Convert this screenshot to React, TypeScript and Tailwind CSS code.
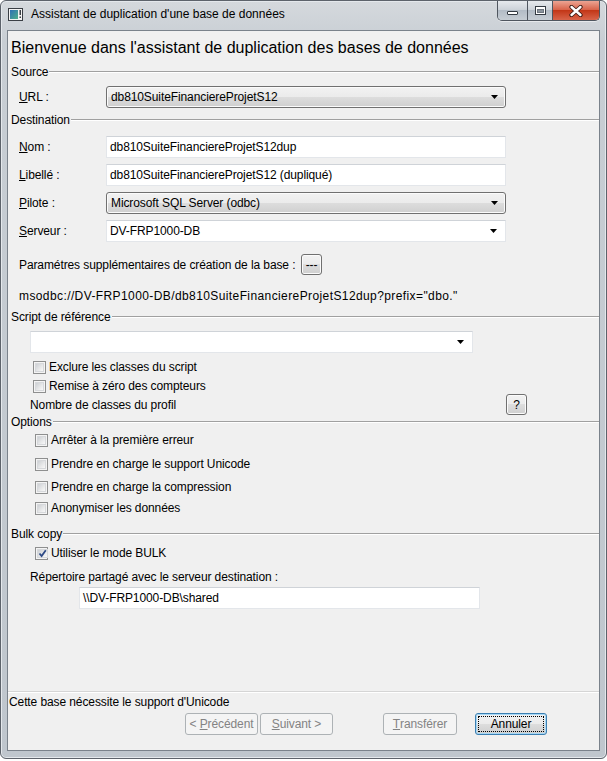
import type { ReactNode } from 'react';

function Arrow() {
  return (
    <svg width="7" height="4" viewBox="0 0 7 4">
      <path d="M0 0h7L3.5 4z" fill="#000" />
    </svg>
  );
}

function GroupHeader({ label, className = '' }: { label: string; className?: string }) {
  return (
    <div className={`flex items-center h-[14px] ${className}`}>
      <span className="pl-[3px] pr-[1px] leading-none whitespace-nowrap">{label}</span>
      <div className="flex-1 h-0 border-t border-t-[#a0a0a0] border-b border-b-white" />
    </div>
  );
}

function Check({ checked = false }: { checked?: boolean }) {
  return (
    <span className="w-[13px] h-[13px] shrink-0 border border-[#8e8f8f] bg-[#f4f4f4] p-[1px] flex">
      <span className="flex-1 flex items-center justify-center bg-[linear-gradient(135deg,#cdd0d4,#e8e9ea_60%,#f8f8f8)] border border-[#d6d8db]">
        {checked && (
          <svg width="9" height="9" viewBox="0 0 9 9">
            <path d="M1.5 4.5L3.6 7L7.8 1.2" fill="none" stroke="#2d4a86" strokeWidth="1.8" />
          </svg>
        )}
      </span>
    </span>
  );
}

function CheckRow({ label, checked, className = '' }: { label: string; checked?: boolean; className?: string }) {
  return (
    <div className={`flex items-center h-[16px] gap-[3px] ${className}`}>
      <Check checked={checked} />
      <span className="leading-none whitespace-nowrap">{label}</span>
    </div>
  );
}

function Btn({
  children,
  className = '',
  disabled,
  focused,
}: {
  children: ReactNode;
  className?: string;
  disabled?: boolean;
  focused?: boolean;
}) {
  if (disabled) {
    return (
      <div className={`h-[22px] rounded-[3px] border border-[#adb2b5] bg-[#f4f4f4] text-[#838383] flex items-center justify-center ${className}`}>
        {children}
      </div>
    );
  }
  return (
    <div
      className={`h-[22px] rounded-[3px] border ${focused ? 'border-[#3c7fb1] shadow-[inset_0_0_0_1px_#a7d8f6]' : 'border-[#707070] shadow-[inset_0_0_0_1px_#fbfbfb]'} bg-[linear-gradient(#f2f2f2,#ebebeb_50%,#dddddd_50%,#cfcfcf)] flex p-[2px] ${className}`}
    >
      <div className={`flex-1 flex items-center justify-center ${focused ? 'border border-dotted border-black' : ''}`}>
        {children}
      </div>
    </div>
  );
}

function ReadCombo({ value, className = '' }: { value: string; className?: string }) {
  return (
    <div className={`h-[22px] rounded-[3px] border border-[#707070] shadow-[inset_0_0_0_1px_#fbfbfb] bg-[linear-gradient(#f2f2f2,#ebebeb_50%,#dddddd_50%,#cfcfcf)] flex items-center pl-[4px] pr-[7px] ${className}`}>
      <span className="flex-1 whitespace-nowrap">{value}</span>
      <Arrow />
    </div>
  );
}

function Field({ value, combo, className = '' }: { value: string; combo?: boolean; className?: string }) {
  return (
    <div className={`h-[22px] bg-white border border-[#e3e6ea] border-t-[#cfd3d8] flex items-center pl-[3px] pr-[8px] ${className}`}>
      <span className="flex-1 whitespace-nowrap">{value}</span>
      {combo && <Arrow />}
    </div>
  );
}

function Label({ k, rest }: { k: string; rest: string }) {
  return (
    <span className="w-[87px] shrink-0 whitespace-nowrap">
      <u className="underline-offset-[1px]">{k}</u>
      {rest}
    </span>
  );
}

function TitleIcon() {
  return (
    <svg width="15" height="13" viewBox="0 0 15 13">
      <rect x="0.5" y="0.5" width="14" height="12" fill="#f4f4f4" stroke="#3a3f45" />
      <rect x="2" y="2" width="8" height="9" fill="url(#g)" />
      <rect x="11.5" y="2" width="1.5" height="5" fill="#3a3f45" />
      <rect x="11.5" y="8.5" width="1.5" height="1.5" fill="#3a3f45" />
      <defs>
        <linearGradient id="g" x1="0" y1="0" x2="1" y2="1">
          <stop offset="0" stopColor="#2f6fb5" />
          <stop offset="1" stopColor="#4fb08a" />
        </linearGradient>
      </defs>
    </svg>
  );
}

function CaptionButtons() {
  return (
    <div className="flex h-[20px] rounded-b-[5px] border border-t-0 border-[#4f565f] overflow-hidden shadow-[0_1px_0_#ffffff80]">
      <div className="w-[30px] flex items-end justify-center pb-[5px] bg-[linear-gradient(#e6e9ed,#cdd3d9_45%,#b3bcc6_50%,#c6cdd4)] border-r border-[#4f565f]">
        <div className="w-[11px] h-[4px] bg-white border border-[#333a42] rounded-[1px]" />
      </div>
      <div className="w-[25px] flex items-center justify-center bg-[linear-gradient(#e6e9ed,#cdd3d9_45%,#b3bcc6_50%,#c6cdd4)] border-r border-[#4f565f]">
        <div className="w-[11px] h-[9px] border border-[#333a42] bg-white p-[1px] pt-[2px]">
          <div className="w-full h-full bg-[#8a939c] border border-[#6e767f]" />
        </div>
      </div>
      <div className="w-[46px] flex items-center justify-center bg-[linear-gradient(#eca493,#d9654c_45%,#c33718_50%,#d8644a)]">
        <svg width="14" height="12" viewBox="0 0 14 12">
          <path d="M2.5 2L11.5 10M11.5 2L2.5 10" stroke="#3b1a14" strokeWidth="4.2" strokeLinecap="round" />
          <path d="M2.5 2L11.5 10M11.5 2L2.5 10" stroke="#fff" strokeWidth="2.4" strokeLinecap="round" />
        </svg>
      </div>
    </div>
  );
}

export default function App() {
  return (
    <div className="w-[607px] h-[761px] bg-white font-['Liberation_Sans',Arial,sans-serif] text-[12px] text-black">
      <div className="w-[607px] h-[759px] rounded-[6px] border border-[#5d636b] bg-[linear-gradient(#d5d9dd,#c8ced4_40px,#bfc6cd)] flex flex-col shadow-[inset_0_0_0_1px_#e4e8ec]">
        {/* Title bar */}
        <div className="h-[29px] flex justify-between">
          <div className="flex items-center gap-[8px] pl-[7px] pb-[3px]">
            <TitleIcon />
            <span className="text-[12px] whitespace-nowrap">Assistant de duplication d'une base de données</span>
          </div>
          <div className="mr-[6px]">
            <CaptionButtons />
          </div>
        </div>

        {/* Client area */}
        <div className="mx-[6px] h-[721px] border border-[#7a828b] bg-[#f0f0f0] flex flex-col tracking-[-0.1px]">
          <div className="h-[34px] flex items-center pl-[3px] text-[16px] tracking-normal whitespace-nowrap">
            Bienvenue dans l'assistant de duplication des bases de données
          </div>

          <GroupHeader label="Source" />
          <div className="mt-[7px] flex items-center pl-[11px]">
            <Label k="U" rest="RL :" />
            <ReadCombo value="db810SuiteFinanciereProjetS12" className="w-[400px]" />
          </div>

          <GroupHeader label="Destination" className="mt-[5px]" />
          <div className="mt-[9px] flex items-center pl-[11px]">
            <Label k="N" rest="om :" />
            <Field value="db810SuiteFinanciereProjetS12dup" className="w-[400px]" />
          </div>
          <div className="mt-[6px] flex items-center pl-[11px]">
            <Label k="L" rest="ibellé :" />
            <Field value="db810SuiteFinanciereProjetS12 (dupliqué)" className="w-[400px]" />
          </div>
          <div className="mt-[6px] flex items-center pl-[11px]">
            <Label k="P" rest="ilote :" />
            <ReadCombo value="Microsoft SQL Server (odbc)" className="w-[400px]" />
          </div>
          <div className="mt-[6px] flex items-center pl-[11px]">
            <Label k="S" rest="erveur :" />
            <Field value="DV-FRP1000-DB" combo className="w-[400px]" />
          </div>
          <div className="mt-[12px] flex items-center pl-[11px] h-[21px]">
            <span className="w-[282px] whitespace-nowrap">Paramétres supplémentaires de création de la base :</span>
            <Btn className="w-[21px] !h-[21px]">---</Btn>
          </div>
          <div className="mt-[12px] h-[18px] flex items-center pl-[11px] whitespace-nowrap tracking-[0.4px]">
            msodbc://DV-FRP1000-DB/db810SuiteFinanciereProjetS12dup?prefix="dbo."
          </div>

          <GroupHeader label="Script de référence" className="mt-[5px]" />
          <div className="mt-[7px] pl-[22px]">
            <Field value="" combo className="w-[443px]" />
          </div>
          <CheckRow label="Exclure les classes du script" className="mt-[6px] pl-[25px]" />
          <CheckRow label="Remise à zéro des compteurs" className="mt-[3px] pl-[25px]" />
          <div className="h-[21px] flex items-end pl-[22px]">
            <span className="w-[476px] whitespace-nowrap pb-[1px]">Nombre de classes du profil</span>
            <Btn className="w-[21px] !h-[21px]">?</Btn>
          </div>

          <GroupHeader label="Options" />
          <CheckRow label="Arrêter à la première erreur" className="mt-[3px] pl-[27px]" />
          <CheckRow label="Prendre en charge le support Unicode" className="mt-[8px] pl-[27px]" />
          <CheckRow label="Prendre en charge la compression" className="mt-[7px] pl-[27px]" />
          <CheckRow label="Anonymiser les données" className="mt-[5px] pl-[27px]" />

          <GroupHeader label="Bulk copy" className="mt-[11px]" />
          <CheckRow label="Utiliser le mode BULK" checked className="mt-[4px] pl-[27px]" />
          <div className="mt-[8px] h-[16px] flex items-center pl-[22px] whitespace-nowrap">
            Répertoire partagé avec le serveur destination :
          </div>
          <div className="mt-[2px] pl-[71px]">
            <Field value="\\DV-FRP1000-DB\shared" className="w-[401px]" />
          </div>

          <div className="flex-1" />

          <div className="h-0 border-t border-t-[#d5d5d5] border-b border-b-white" />
          <div className="h-[16px] mt-[1px] flex items-center pl-[1px] whitespace-nowrap">
            Cette base nécessite le support d'Unicode
          </div>
          <div className="mt-[3px] mb-[15px] flex pl-[177px]">
            <Btn disabled className="w-[73px]">
              &lt;&nbsp;<u>P</u>récédent
            </Btn>
            <Btn disabled className="w-[73px] ml-[2px]">
              <u>S</u>uivant &gt;
            </Btn>
            <Btn disabled className="w-[74px] ml-[50px]">
              <u>T</u>ransférer
            </Btn>
            <Btn focused className="w-[72px] ml-[18px]">
              Annuler
            </Btn>
          </div>
        </div>
      </div>
    </div>
  );
}
